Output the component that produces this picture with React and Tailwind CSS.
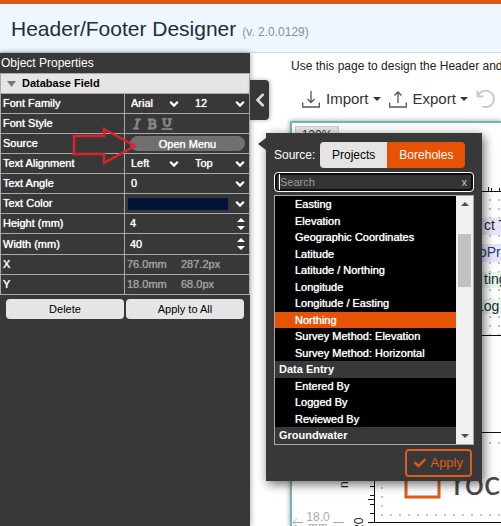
import { useState } from "react";
import { FaBold, FaCheck, FaItalic, FaUnderline } from "react-icons/fa";

const FIELDS = [
  { label: "Easting" },
  { label: "Elevation" },
  { label: "Geographic Coordinates" },
  { label: "Latitude" },
  { label: "Latitude / Northing" },
  { label: "Longitude" },
  { label: "Longitude / Easting" },
  { label: "Northing" },
  { label: "Survey Method: Elevation" },
  { label: "Survey Method: Horizontal" },
  { label: "Data Entry", group: true },
  { label: "Entered By" },
  { label: "Logged By" },
  { label: "Reviewed By" },
  { label: "Groundwater", group: true },
];

function Chevron({ className = "" }) {
  return (
    <svg viewBox="0 0 10 8" className={`pointer-events-none h-2 w-2.5 ${className}`} aria-hidden="true">
      <path d="M1.2 1.8 L5 5.6 L8.8 1.8" fill="none" stroke="#fff" strokeWidth="2.2" />
    </svg>
  );
}

function Dropdown({ label, options, className = "" }) {
  return (
    <span className={`relative flex items-center ${className}`}>
      <select
        aria-label={label}
        className="w-full appearance-none bg-transparent pl-1 text-white outline-none [text-shadow:0_0_1px_currentColor]"
      >
        {options.map((option) => (
          <option key={option}>{option}</option>
        ))}
      </select>
      <Chevron className="absolute right-1" />
    </span>
  );
}

function NumberField({ id, value, onChange }) {
  return (
    <div className="flex flex-1 items-center">
      <input
        id={id}
        type="text"
        inputMode="numeric"
        value={value}
        onChange={(e) => onChange(Number(e.target.value) || 0)}
        className="w-0 min-w-0 flex-1 bg-transparent pl-[3px] text-white outline-none [text-shadow:0_0_1px_currentColor]"
      />
      <div className="mr-1 flex flex-col gap-1">
        <button type="button" aria-label="Increase" onClick={() => onChange(value + 1)}>
          <svg viewBox="0 0 8 4" className="block h-1 w-2"><path d="M4 0 L8 4 H0 Z" fill="#fff" /></svg>
        </button>
        <button type="button" aria-label="Decrease" onClick={() => onChange(value - 1)}>
          <svg viewBox="0 0 8 4" className="block h-1 w-2"><path d="M0 0 H8 L4 4 Z" fill="#fff" /></svg>
        </button>
      </div>
    </div>
  );
}

function Row({ label, htmlFor, height = "h-5", children }) {
  return (
    <div className={`flex border-b border-[#a9a9a9] ${height}`}>
      <div className="flex w-1/2 items-center border-r border-[#a9a9a9] pl-0.5 [text-shadow:0_0_1px_currentColor]">
        {htmlFor ? <label htmlFor={htmlFor}>{label}</label> : <span>{label}</span>}
      </div>
      <div className="relative flex w-1/2 items-center pl-0.5">{children}</div>
    </div>
  );
}

function SourceMenu() {
  const [tab, setTab] = useState("Boreholes");
  const [selected, setSelected] = useState("Northing");
  const [search, setSearch] = useState("");

  return (
    <div className="absolute -top-px left-[141px] z-20 w-[216px] bg-[#383838] px-2 pb-1 pt-[9px] text-white shadow-[2px_3px_10px_rgba(0,0,0,0.6)]">
      <svg viewBox="0 0 8 12" className="absolute -left-2 top-[5px] h-3 w-2" aria-hidden="true">
        <path d="M8 0 V12 L0 6 Z" fill="#383838" />
      </svg>
      <div className="flex items-center text-xs">
        <span className="w-[46px]">Source:</span>
        <div className="flex h-[26px] overflow-hidden rounded">
          {["Projects", "Boreholes"].map((name) => (
            <button
              key={name}
              type="button"
              onClick={() => setTab(name)}
              className={name === tab ? "bg-[#e65305] px-3 text-white" : "bg-[#e4e4e4] px-3 text-black"}
            >
              {name}
            </button>
          ))}
        </div>
      </div>
      <div className="mt-1 flex h-5 items-center rounded border border-white bg-[#333] pl-1 pr-0.5 shadow-[inset_0_0_0_2px_#0c0c0c]">
        <input
          aria-label="Search"
          placeholder="Search"
          value={search}
          onChange={(e) => setSearch(e.target.value)}
          className="w-0 flex-1 border-l border-white bg-transparent text-[11px] text-white outline-none placeholder:text-[#9a9a9a]"
        />
        <button type="button" aria-label="Clear search" onClick={() => setSearch("")} className="px-1 text-[11px] text-[#c4c4c4]">
          x
        </button>
      </div>
      <div className="mt-[3px] flex h-[250px] border border-[#a9a9a9]">
        <ul className="flex flex-1 flex-col bg-black text-[11px]">
          {FIELDS.map((field) => (
            <li key={field.label} className="flex flex-1">
              {field.group ? (
                <span className="flex flex-1 items-center bg-[#383838] pl-1 font-bold">{field.label}</span>
              ) : (
                <button
                  type="button"
                  onClick={() => setSelected(field.label)}
                  className={
                    field.label === selected
                      ? "flex flex-1 items-center bg-[#e65305] pl-5 [text-shadow:0_0_1px_currentColor]"
                      : "flex flex-1 items-center pl-5 [text-shadow:0_0_1px_currentColor]"
                  }
                >
                  {field.label}
                </button>
              )}
            </li>
          ))}
        </ul>
        <div className="flex w-[17px] flex-col items-center justify-between bg-[#f1f1f1] py-1.5">
          <svg viewBox="0 0 8 4" className="h-1 w-2"><path d="M4 0 L8 4 H0 Z" fill="#505050" /></svg>
          <div className="mb-auto mt-7 h-[53px] w-[13px] bg-[#c1c1c1]" />
          <svg viewBox="0 0 8 4" className="h-1 w-2"><path d="M0 0 H8 L4 4 Z" fill="#505050" /></svg>
        </div>
      </div>
      <div className="mt-1 flex justify-end pr-0.5">
        <button type="button" className="flex h-7 items-center gap-1 rounded border-2 border-[#e05a18] px-[7px] text-[13px] text-[#e05a18]">
          <FaCheck className="size-3" />
          Apply
        </button>
      </div>
    </div>
  );
}

function ObjectProperties() {
  const [height, setHeight] = useState(4);
  const [width, setWidth] = useState(40);

  return (
    <aside className="relative z-10 w-[250px] flex-none bg-[#383838] text-[11px] text-white shadow-[0_0_6px_rgba(0,0,0,0.4)]">
      <h2 className="flex h-5 items-center pl-px text-xs">Object Properties</h2>
      <div className="border-x border-t border-[#a9a9a9]">
        <button
          type="button"
          className="flex h-5 w-full items-center gap-1.5 border-b border-[#a9a9a9] bg-[#e5e5e5] pl-1.5 font-bold text-black"
        >
          <svg viewBox="0 0 9 6" className="h-1.5 w-[9px]"><path d="M0 0 H9 L4.5 6 Z" fill="#777" /></svg>
          Database Field
        </button>
        <Row label="Font Family">
          <Dropdown label="Font family" options={["Arial", "Courier"]} className="w-[56px]" />
          <Dropdown label="Font size" options={["12", "14"]} className="ml-2 flex-1" />
        </Row>
        <Row label="Font Style">
          <div className="flex gap-[3px] pl-1 text-[#858585]">
            <button type="button" aria-label="Italic"><FaItalic className="size-3" strokeWidth="30" stroke="currentColor" /></button>
            <button type="button" aria-label="Bold"><FaBold className="size-3" strokeWidth="30" stroke="currentColor" /></button>
            <button type="button" aria-label="Underline"><FaUnderline className="size-3" strokeWidth="30" stroke="currentColor" /></button>
          </div>
        </Row>
        <Row label="Source">
          <button
            type="button"
            className="ml-[3px] mr-1 h-[15px] flex-1 rounded-full bg-[#707070] [text-shadow:0_0_1px_currentColor]"
          >
            Open Menu
          </button>
          <svg viewBox="0 0 68 40" className="absolute -left-[56px] -top-2 z-10 h-10 w-[68px]" aria-hidden="true">
            <path d="M5 10 H35 V3 L66 20 L35 37 V28 H5 Z" fill="none" stroke="#e0202c" strokeWidth="2.5" />
          </svg>
          <SourceMenu />
        </Row>
        <Row label="Text Alignment">
          <Dropdown label="Horizontal alignment" options={["Left", "Right"]} className="w-[56px]" />
          <Dropdown label="Vertical alignment" options={["Top", "Bottom"]} className="ml-2 flex-1" />
        </Row>
        <Row label="Text Angle">
          <Dropdown label="Text angle" options={["0", "90"]} className="flex-1" />
        </Row>
        <Row label="Text Color">
          <button type="button" aria-label="Text color" className="flex flex-1 items-center justify-between pl-px pr-1">
            <span className="h-3 w-[100px] bg-[#03143a]" />
            <Chevron />
          </button>
        </Row>
        <Row label="Height (mm)" htmlFor="field-height">
          <NumberField id="field-height" value={height} onChange={setHeight} />
        </Row>
        <Row label="Width (mm)" htmlFor="field-width" height="h-[21px]">
          <NumberField id="field-width" value={width} onChange={setWidth} />
        </Row>
        <Row label="X">
          <span className="w-[54px] text-[#a0a0a0] [text-shadow:0_0_1px_currentColor]">76.0mm</span>
          <span className="text-[#a0a0a0] [text-shadow:0_0_1px_currentColor]">287.2px</span>
        </Row>
        <Row label="Y">
          <span className="w-[54px] text-[#a0a0a0] [text-shadow:0_0_1px_currentColor]">18.0mm</span>
          <span className="text-[#a0a0a0] [text-shadow:0_0_1px_currentColor]">68.0px</span>
        </Row>
      </div>
      <div className="mt-1 grid grid-cols-2 gap-0.5 px-1.5 text-black">
        <button type="button" className="h-5 rounded-sm bg-[#e5e5e5]">Delete</button>
        <button type="button" className="h-5 rounded-sm bg-[#e5e5e5]">Apply to All</button>
      </div>
      <button
        type="button"
        aria-label="Collapse panel"
        className="absolute left-full top-[27px] flex h-10 w-[19px] items-center justify-center rounded-r bg-[#383838] shadow-[1px_0_4px_rgba(0,0,0,0.3)]"
      >
        <svg viewBox="0 0 10 14" className="h-3.5 w-2.5"><path d="M8.5 1 L2.5 7 L8.5 13" fill="none" stroke="#ddd" strokeWidth="2.5" /></svg>
      </button>
    </aside>
  );
}

function TrayIcon({ up }) {
  return (
    <svg viewBox="0 0 18 17" className="h-[17px] w-[18px]" fill="none" stroke="#555" strokeWidth="1.3" aria-hidden="true">
      <path d="M.7 11.5 V16 H17.3 V11.5" />
      <path d={up ? "M9 12 V1 M5.5 4.5 L9 1 L12.5 4.5" : "M9 0 V11.5 M5.5 8 L9 11.5 L12.5 8"} />
    </svg>
  );
}

function Caret() {
  return (
    <svg viewBox="0 0 8 4" className="h-1 w-2" aria-hidden="true"><path d="M0 0 H8 L4 4 Z" fill="#333" /></svg>
  );
}

function Toolbar() {
  return (
    <div className="flex h-[30px] items-center whitespace-nowrap pl-3 text-[15px] text-[#333]">
      <button type="button" className="flex items-center gap-1.5">
        <TrayIcon />
        <span className="flex items-center gap-1">Import <Caret /></span>
      </button>
      <button type="button" className="ml-2 flex items-center gap-1.5">
        <TrayIcon up />
        <span className="flex items-center gap-1">Export <Caret /></span>
      </button>
      <button type="button" aria-label="Undo" className="ml-2">
        <svg viewBox="0 0 20 20" className="size-5" fill="none" stroke="#c8c8c8" strokeWidth="1.8">
          <path d="M1.5 1.5 V7.5 H7.5" />
          <path d="M2 7 A8.2 8.2 0 1 1 6 17.2" />
        </svg>
      </button>
    </div>
  );
}

// Header template drawn in page units, with rulers along its top and left edges
function TemplateCanvas() {
  return (
    <div className="relative flex-1 overflow-hidden border-l-2 border-t-2 border-[#76b3b3] bg-white shadow-[0_0_5px_rgba(0,0,0,0.4)]">
      <div className="absolute left-[3px] top-[3px] h-5 w-11 border border-[#ccc] bg-[#e5e5e5] text-center text-xs text-[#333]">
        120%
      </div>
      <svg width="209" height="403" viewBox="292 123 209 403" fontFamily="Liberation Sans, Arial, sans-serif" className="block">
        <defs>
          <pattern id="dots" x="377" y="195" width="9" height="9" patternUnits="userSpaceOnUse">
            <rect x="4" y="4" width="2" height="2" fill="#c4c4c4" />
          </pattern>
        </defs>
        <rect x="375" y="192" width="126" height="143" fill="url(#dots)" />
        <rect x="375" y="438" width="126" height="8" fill="url(#dots)" />
        <rect x="375" y="447" width="9" height="72" fill="url(#dots)" />
        <rect x="375" y="510" width="126" height="9" fill="url(#dots)" />
        <g opacity="0.85">
          <rect x="400" y="218" width="101" height="17" fill="#e4e2fb" />
          <rect x="400" y="244" width="101" height="18" fill="#e4e2fb" />
          <rect x="400" y="272" width="101" height="16" fill="#e4f6e4" />
          <rect x="400" y="299" width="101" height="15" fill="#e4f6e4" />
        </g>
        <g fontSize="14" fill="#1c2740">
          <text x="484" y="230">ct T</text>
          <text x="479" y="257" fill="#1c3f70">oPr</text>
          <text x="484" y="284">ting</text>
          <text x="476" y="311">Log</text>
        </g>
        <g fill="none" stroke="#111" shapeRendering="crispEdges">
          <path d="M374 191.5 H501 M374.5 191 V522 H501 M374 335.5 H501 M374 432.5 H501" />
          <path d="M488.5 187 V191 M491.5 188 V191 M499.5 188 V191" />
          <path d="M370 486.5 H374 M370 495.5 H374 M368 499.5 H374 M370 504.5 H374 M370 513.5 H374 M368 522.5 H374" />
        </g>
        <rect x="406" y="466" width="33" height="31" fill="none" stroke="#e05a18" strokeWidth="3" />
        <text x="453" y="495" fontSize="34" fontFamily="Lato, sans-serif" fill="#4a4a4a">roc</text>
        <g fontSize="12" fill="#222">
          <text transform="translate(348 488) rotate(-90)">n</text>
          <text transform="translate(363 531) rotate(-90)">20</text>
        </g>
        <g fill="#aaa" fontSize="12" textAnchor="middle">
          <text x="318" y="521">18.0</text>
          <text x="318" y="531">mm</text>
        </g>
        <path d="M303 522.5 H293 M297 518.5 L293 522.5 L297 526.5 M333 522.5 H344" fill="none" stroke="#aaa" />
      </svg>
    </div>
  );
}

export default function App() {
  return (
    <div className="flex h-screen flex-col overflow-hidden bg-white font-['Liberation_Sans',Arial,sans-serif]">
      <header className="flex h-[53px] flex-none items-baseline gap-1.5 border-b border-t-4 border-b-[#cfd9e2] border-t-[#d9581a] bg-[#eef7ff] pl-[11px] pt-[9px]">
        <h1 className="text-[21px] text-[#222d38]">Header/Footer Designer</h1>
        <span className="text-xs text-[#8a8f96]">(v. 2.0.0129)</span>
      </header>
      <div className="flex min-h-0 flex-1">
        <ObjectProperties />
        <main className="flex min-w-0 flex-1 flex-col pl-10 pt-[5px]">
          <p className="whitespace-nowrap pl-px text-xs text-[#222]">Use this page to design the Header and</p>
          <div className="pb-[7px] pt-2.5">
            <Toolbar />
          </div>
          <TemplateCanvas />
        </main>
      </div>
    </div>
  );
}
